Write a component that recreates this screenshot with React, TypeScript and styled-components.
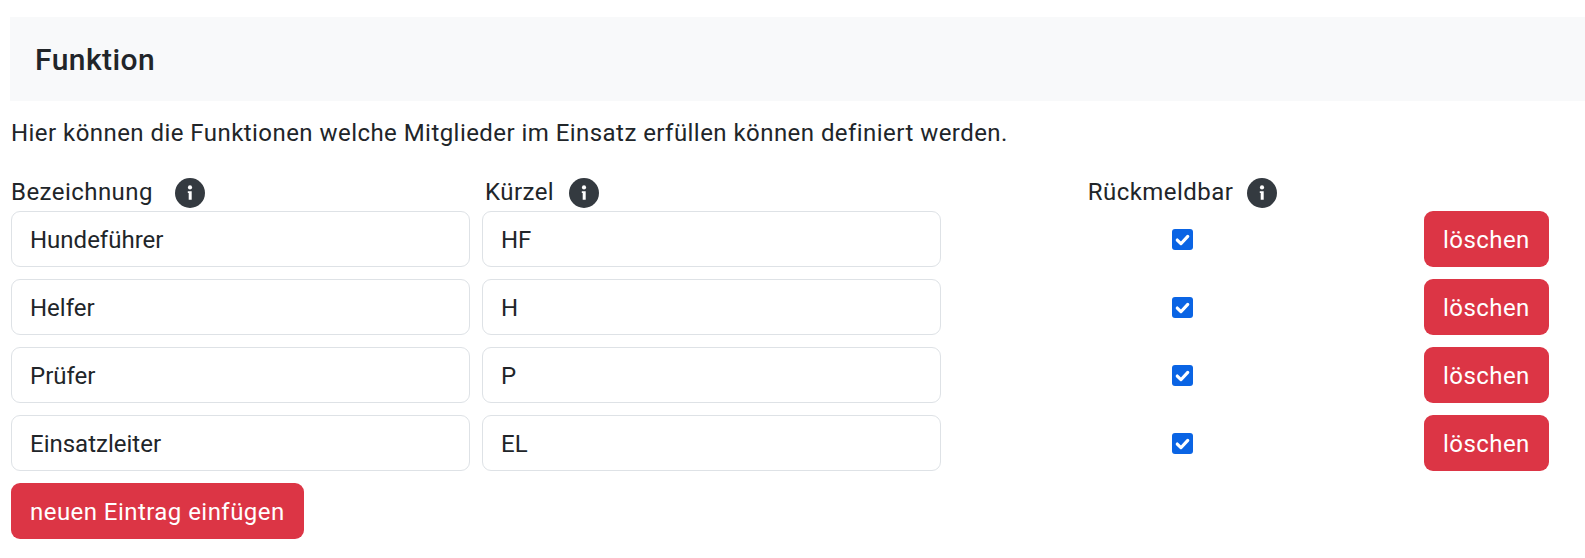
import React from 'react'
import styled, { createGlobalStyle } from 'styled-components'

const GlobalStyle = createGlobalStyle`
	html, body {
		margin: 0;
		padding: 0;
		background: #fff;
		overflow: hidden;
	}
	body {
		font-family: Roboto, "Liberation Sans", sans-serif;
		color: #212529;
	}
`

const Page = styled.main`
	padding: 17px 0 0 10px;
	font-size: 24px;
	line-height: 1.5;
	letter-spacing: 0.45px;
`

const Header = styled.header`
	display: flex;
	align-items: center;
	height: 84px;
	padding-left: 25px;
	background: #f8f9fa;
`

const Title = styled.h1`
	margin: 2px 0 0;
	font-size: 30px;
	font-weight: 500;
	line-height: 1.2;
`

const Intro = styled.p`
	margin: 13.5px 0 0 1px;
`

const Table = styled.div`
	display: grid;
	grid-template-columns: repeat(3, 459px) 1fr;
	column-gap: 12px;
	row-gap: 12px;
	margin: 27.5px 0 0 1px;
`

const LabelCell = styled.div<{ $align?: string; $gap: number; $inset?: number }>`
	display: flex;
	align-items: center;
	justify-content: ${({ $align }) => $align ?? 'flex-start'};
	gap: ${({ $gap }) => $gap}px;
	height: 30px;
	margin: 0 0 -9px ${({ $inset }) => $inset ?? 0}px;
`

const LabelText = styled.span`
	margin-bottom: 2px;
`

const TextInput = styled.input`
	box-sizing: border-box;
	width: 100%;
	height: 56px;
	padding: 2px 18px 0;
	border: 1px solid #dee2e6;
	border-radius: 9px;
	background: #fff;
	color: #212529;
	font: inherit;
	letter-spacing: 0;
	outline: none;
`

const CheckCell = styled.div`
	display: flex;
	align-items: center;
	justify-content: center;
	height: 56px;
`

const CheckBox = styled.span`
	display: block;
	width: 21px;
	height: 21px;
	border-radius: 3px;
	background: #0a64e4;

	svg {
		display: block;
	}
`

const DangerButton = styled.button`
	height: 56px;
	padding: 2px 19px 0;
	border: 0;
	border-radius: 9px;
	background: #dc3545;
	color: #fff;
	font: inherit;
	letter-spacing: inherit;
	white-space: nowrap;
`

const ButtonCell = styled.div`
	display: flex;
`

const AddButton = styled(DangerButton)`
	display: block;
	margin: 12px 0 0 1px;
`

const InfoIcon = () => (
	<svg width="30" height="30" viewBox="0 0 30 30" aria-hidden="true">
		<circle cx="15" cy="15" r="15" fill="#343a40" />
		<circle cx="15" cy="9.4" r="2.1" fill="#fff" />
		<path fill="#fff" d="M12.8 13.2h3.9v8.6h-3v-6.7h-.9z" />
	</svg>
)

const CheckMark = () => (
	<svg width="21" height="21" viewBox="0 0 20 20" aria-hidden="true">
		<path fill="none" stroke="#fff" strokeLinecap="round" strokeLinejoin="round" strokeWidth="3" d="m5 10.5 3.5 3.5 6.5-7" />
	</svg>
)

const rows = [
	['Hundeführer', 'HF'],
	['Helfer', 'H'],
	['Prüfer', 'P'],
	['Einsatzleiter', 'EL'],
]

export default function App() {
	return (
		<Page>
			<GlobalStyle />
			<Header>
				<Title>Funktion</Title>
			</Header>
			<Intro>Hier können die Funktionen welche Mitglieder im Einsatz erfüllen können definiert werden.</Intro>
			<Table>
				<LabelCell $gap={22}>
					<LabelText>Bezeichnung</LabelText>
					<InfoIcon />
				</LabelCell>
				<LabelCell $gap={15} $inset={3}>
					<LabelText>Kürzel</LabelText>
					<InfoIcon />
				</LabelCell>
				<LabelCell $gap={14} $align="center">
					<LabelText>Rückmeldbar</LabelText>
					<InfoIcon />
				</LabelCell>
				<div />
				{rows.map(([name, short]) => (
					<React.Fragment key={short}>
						<TextInput defaultValue={name} />
						<TextInput defaultValue={short} />
						<CheckCell>
							<CheckBox>
								<CheckMark />
							</CheckBox>
						</CheckCell>
						<ButtonCell>
							<DangerButton>löschen</DangerButton>
						</ButtonCell>
					</React.Fragment>
				))}
			</Table>
			<AddButton>neuen Eintrag einfügen</AddButton>
		</Page>
	)
}
